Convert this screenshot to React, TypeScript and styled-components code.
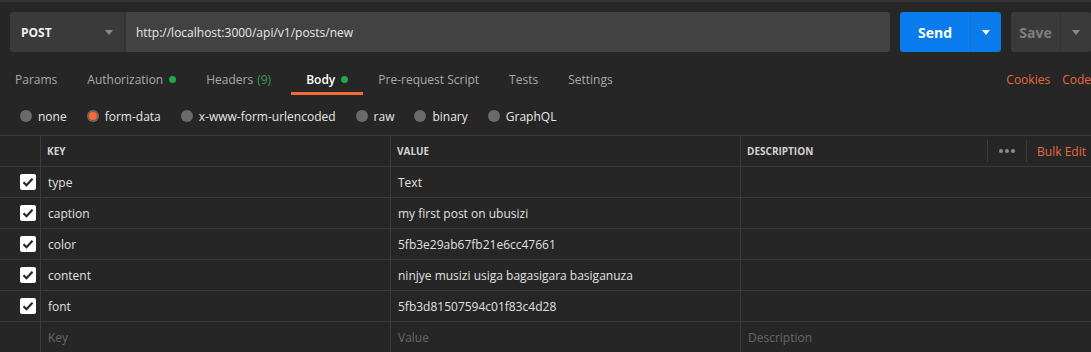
import { Fragment } from 'react';
import styled, { createGlobalStyle } from 'styled-components';

const GlobalStyle = createGlobalStyle`
  html, body {
    margin: 0;
    padding: 0;
    background-color: #262626;
    overflow: hidden;
  }

  body {
    font-family: 'Open Sans', 'Liberation Sans', sans-serif;
    font-size: 12px;
    color: #e0e0e0;
  }
`;

const Page = styled.div`
  width: 1091px;
  height: 352px;
  border-top: 2px solid #353535;
  box-sizing: border-box;
  overflow: hidden;
`;

const RequestBar = styled.div`
  display: flex;
  align-items: stretch;
  height: 40px;
  margin-top: 10px;
  padding-left: 10px;
`;

const MethodBox = styled.div`
  width: 116px;
  display: flex;
  align-items: center;
  justify-content: space-between;
  padding: 0 11px;
  box-sizing: border-box;
  background: #3a3a3a;
  border-radius: 3px 0 0 3px;
  border-right: 2px solid #333;
  font-weight: 700;
  color: #f0f0f0;
`;

const Caret = styled.span<{ $color?: string }>`
  width: 0;
  height: 0;
  border-left: 4px solid transparent;
  border-right: 4px solid transparent;
  border-top: 5px solid ${(p) => p.$color || '#8a8a8a'};
`;

const UrlField = styled.div`
  width: 765px;
  display: flex;
  align-items: center;
  padding-left: 10px;
  box-sizing: border-box;
  background: #424242;
  border-radius: 0 3px 3px 0;
  color: #e8e8e8;
`;

const SplitButton = styled.div<{ $primary?: boolean }>`
  display: flex;
  margin-left: 10px;
  border-radius: 3px;
  background: ${(p) => (p.$primary ? '#097bed' : '#3a3a3a')};
  color: ${(p) => (p.$primary ? '#ffffff' : '#7f7f7f')};
  font-size: 14px;
  font-weight: 700;
  flex-shrink: 0;
`;

const ButtonMain = styled.div<{ $width: number }>`
  width: ${(p) => p.$width}px;
  display: flex;
  align-items: center;
  justify-content: center;
`;

const ButtonDrop = styled.div<{ $line: string }>`
  width: 30px;
  display: flex;
  align-items: center;
  justify-content: center;
  border-left: 1px solid ${(p) => p.$line};
`;

const TabRow = styled.div`
  display: flex;
  align-items: center;
  height: 40px;
  margin-top: 7px;
`;

const Tab = styled.div<{ $active?: boolean }>`
  position: relative;
  display: flex;
  align-items: center;
  height: 100%;
  padding: 0 15px;
  color: ${(p) => (p.$active ? '#ffffff' : '#a9a9a9')};
  font-weight: ${(p) => (p.$active ? 600 : 400)};

  &::after {
    content: '';
    display: ${(p) => (p.$active ? 'block' : 'none')};
    position: absolute;
    left: 0;
    right: 0;
    bottom: 4px;
    height: 3px;
    background: #f26b3a;
  }
`;

const Dot = styled.span`
  width: 7px;
  height: 7px;
  border-radius: 50%;
  background: #22a64e;
  margin-left: 6px;
`;

const Count = styled.span`
  color: #3b9b4f;
  margin-left: 4px;
  padding-right: 5px;
`;

const RightLinks = styled.div`
  margin-left: auto;
  display: flex;
  gap: 12px;
  color: #e8693a;
`;

const RadioRow = styled.div`
  display: flex;
  align-items: center;
  height: 20px;
  margin-top: 7px;
  padding-left: 20px;
  gap: 20px;
`;

const RadioItem = styled.label`
  display: flex;
  align-items: center;
  gap: 6px;
  color: #e6e6e6;
`;

const RadioCircle = styled.span<{ $checked?: boolean }>`
  width: 12px;
  height: 12px;
  border-radius: 50%;
  background: ${(p) =>
    p.$checked
      ? 'radial-gradient(circle, #f36a3b 0 3.5px, #8d5646 4.5px, #6e6e6e 6px)'
      : '#6b6b6b'};
`;

const Table = styled.div`
  margin-top: 9px;
  border-top: 1px solid #3c3c3c;
  display: grid;
  grid-template-columns: 41px 350px 350px 1fr;
`;

const Cell = styled.div<{ $last?: boolean }>`
  height: 31px;
  box-sizing: border-box;
  display: flex;
  align-items: center;
  padding-left: 7px;
  border-bottom: 1px solid #3c3c3c;
  border-right: ${(p) => (p.$last ? 'none' : '1px solid #3c3c3c')};
  color: #e0e0e0;
  white-space: nowrap;
`;

const HeadCell = styled(Cell)`
  padding-left: 6px;
  font-size: 10px;
  font-weight: 700;
  color: #d2d2d2;
`;

const CheckCell = styled(Cell)`
  justify-content: flex-end;
  padding: 0 4px 0 0;
`;

const Placeholder = styled.span`
  color: #666666;
`;

const CheckBox = styled.span`
  width: 16px;
  height: 16px;
  border-radius: 2px;
  background: #ffffff;
  display: flex;
  align-items: center;
  justify-content: center;
`;

const HeadTools = styled.div`
  margin-left: auto;
  display: flex;
  align-items: center;
  height: 22px;
`;

const ToolDivider = styled.span`
  width: 1px;
  height: 22px;
  background: #3c3c3c;
`;

const MoreDots = styled.span`
  display: flex;
  gap: 2px;
  padding: 0 11px;
`;

const MoreDot = styled.span`
  width: 4px;
  height: 4px;
  border-radius: 50%;
  background: #8c8c8c;
`;

const BulkEdit = styled.span`
  padding: 0 5px 0 10px;
  color: #e8693a;
  font-weight: 400;
  font-size: 12px;
`;

const Check = () => (
  <svg width="12" height="10" viewBox="0 0 12 10">
    <path d="M1.5 5.2 L4.5 8.2 L10.5 1.8" fill="none" stroke="#262626" strokeWidth="2.2" />
  </svg>
);

const rows = [
  { key: 'type', value: 'Text' },
  { key: 'caption', value: 'my first post on ubusizi' },
  { key: 'color', value: '5fb3e29ab67fb21e6cc47661' },
  { key: 'content', value: 'ninjye musizi usiga bagasigara basiganuza' },
  { key: 'font', value: '5fb3d81507594c01f83c4d28' },
];

const bodyTypes = ['none', 'form-data', 'x-www-form-urlencoded', 'raw', 'binary', 'GraphQL'];

function App() {
  return (
    <Page>
      <GlobalStyle />
      <RequestBar>
        <MethodBox>
          POST
          <Caret />
        </MethodBox>
        <UrlField>http://localhost:3000/api/v1/posts/new</UrlField>
        <SplitButton $primary>
          <ButtonMain $width={70}>Send</ButtonMain>
          <ButtonDrop $line="#1b6fc7">
            <Caret $color="#ffffff" />
          </ButtonDrop>
        </SplitButton>
        <SplitButton>
          <ButtonMain $width={49}>Save</ButtonMain>
          <ButtonDrop $line="#333">
            <Caret />
          </ButtonDrop>
        </SplitButton>
      </RequestBar>

      <TabRow>
        <Tab>Params</Tab>
        <Tab>
          Authorization
          <Dot />
        </Tab>
        <Tab>
          Headers
          <Count>(9)</Count>
        </Tab>
        <Tab $active>
          Body
          <Dot />
        </Tab>
        <Tab>Pre-request Script</Tab>
        <Tab>Tests</Tab>
        <Tab>Settings</Tab>
        <RightLinks>
          <span>Cookies</span>
          <span>Code</span>
        </RightLinks>
      </TabRow>

      <RadioRow>
        {bodyTypes.map((t) => (
          <RadioItem key={t}>
            <RadioCircle $checked={t === 'form-data'} />
            {t}
          </RadioItem>
        ))}
      </RadioRow>

      <Table>
        <HeadCell />
        <HeadCell>KEY</HeadCell>
        <HeadCell>VALUE</HeadCell>
        <HeadCell $last>
          DESCRIPTION
          <HeadTools>
            <ToolDivider />
            <MoreDots>
              <MoreDot />
              <MoreDot />
              <MoreDot />
            </MoreDots>
            <ToolDivider />
            <BulkEdit>Bulk Edit</BulkEdit>
          </HeadTools>
        </HeadCell>

        {rows.map((r) => (
          <Fragment key={r.key}>
            <CheckCell>
              <CheckBox>
                <Check />
              </CheckBox>
            </CheckCell>
            <Cell>{r.key}</Cell>
            <Cell>{r.value}</Cell>
            <Cell $last />
          </Fragment>
        ))}

        <Cell />
        <Cell>
          <Placeholder>Key</Placeholder>
        </Cell>
        <Cell>
          <Placeholder>Value</Placeholder>
        </Cell>
        <Cell $last>
          <Placeholder>Description</Placeholder>
        </Cell>
      </Table>
    </Page>
  );
}

export default App;
